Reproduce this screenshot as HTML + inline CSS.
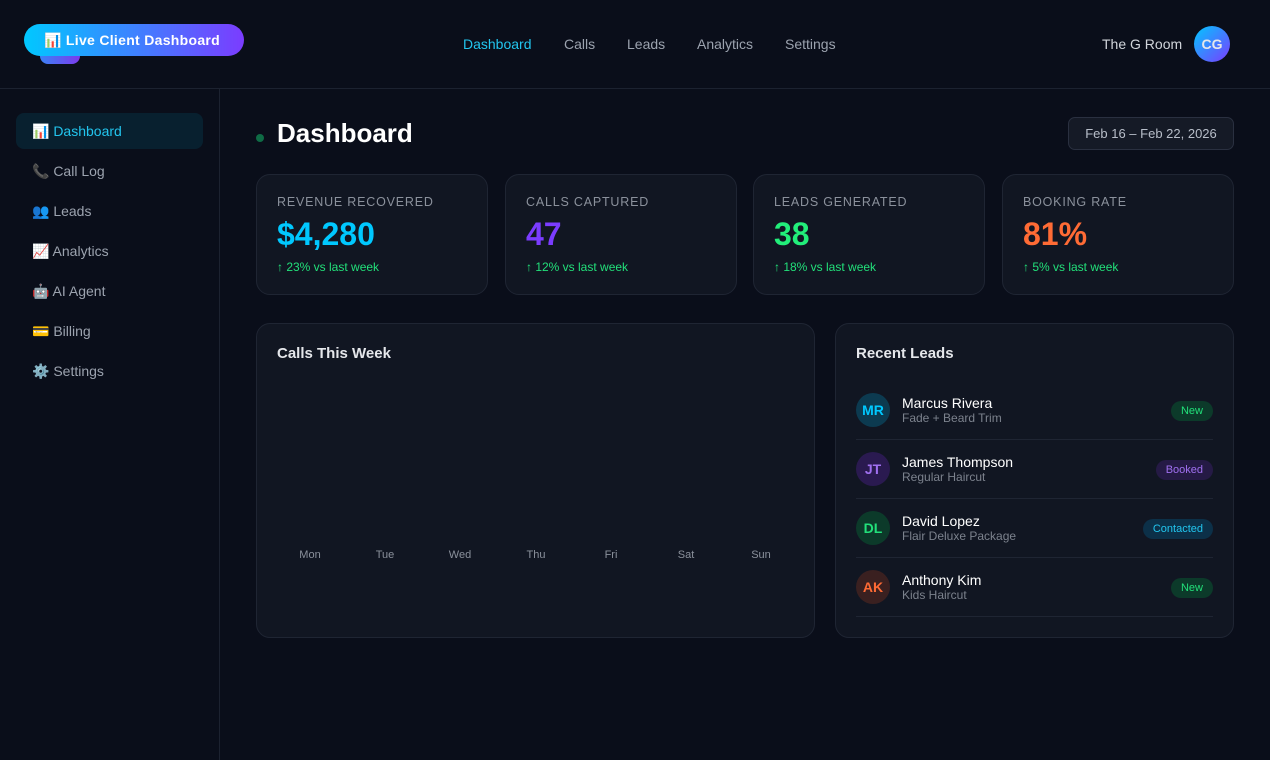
<!DOCTYPE html>
<html><head><meta charset="utf-8"><style>
*{box-sizing:border-box;margin:0;padding:0}
body{width:1270px;height:760px;background:#0a0e1a;font-family:"Liberation Sans","Noto Sans CJK SC",sans-serif;color:#e5e7eb;position:relative;overflow:hidden}
.hdr{position:absolute;left:0;top:0;width:1270px;height:89px;border-bottom:1px solid #1c2230}
.badge2{position:absolute;left:40px;top:44px;width:40px;height:20px;border-radius:8px;background:linear-gradient(90deg,#3b82f6,#7c3aed)}
.badge{position:absolute;left:24px;top:24px;width:220px;height:32px;border-radius:16px;background:linear-gradient(90deg,#00c8ff,#7b3cff);color:#fff;font-weight:bold;font-size:14px;line-height:33px;padding-left:20px;letter-spacing:.3px}
.nav{position:absolute;top:36px;font-size:14px;color:#9ca3af}
.user{position:absolute;left:1102px;top:36px;font-size:14px;color:#d1d5db}
.av{position:absolute;left:1194px;top:26px;width:36px;height:36px;border-radius:50%;background:linear-gradient(135deg,#00c8ff,#7b3cff);color:#e5e7eb;font-weight:bold;font-size:14px;text-align:center;line-height:36px}
.side{position:absolute;left:0;top:89px;width:220px;height:671px;border-right:1px solid #1c2230}
.si{position:absolute;left:16px;width:187px;height:36px;border-radius:8px;font-size:14px;color:#9ca3af;line-height:36px;padding-left:16px}
.si.on{background:#08202f;color:#22c5ee}
h1{position:absolute;left:277px;top:118px;font-size:26px;color:#fff;font-weight:bold}
.dot{position:absolute;left:256px;top:134px;width:8px;height:8px;border-radius:50%;background:#0f6b45}
.date{position:absolute;left:1068px;top:117px;width:166px;height:33px;border:1px solid #2a3040;border-radius:7px;background:#151a26;font-size:13px;color:#b8bec9;text-align:center;line-height:31px}
.card{position:absolute;top:174px;width:232px;height:121px;background:#111622;border:1px solid #1f2533;border-radius:14px;padding:20px}
.lab{font-size:12.5px;letter-spacing:.8px;color:#8b919c}
.val{font-size:32px;font-weight:bold;margin-top:7px}
.ch{font-size:12px;color:#22e07a;margin-top:7px}
.panel{position:absolute;top:323px;height:315px;background:#111622;border:1px solid #1f2533;border-radius:14px}
.pt{position:absolute;left:20px;top:21px;font-size:15px;font-weight:bold;color:#e5e7eb}
.day{position:absolute;top:549px;font-size:11px;color:#8b919c;width:40px;text-align:center}
.row{position:absolute;left:856px;width:357px;height:59px;border-bottom:1px solid #1f2533}
.ra{position:absolute;left:0;top:12px;width:34px;height:34px;border-radius:50%;font-weight:bold;font-size:14px;text-align:center;line-height:34px}
.rn{position:absolute;left:46px;top:14px;font-size:14px;color:#fff}
.rs{position:absolute;left:46px;top:30px;font-size:12px;color:#7c828d}
.tag{position:absolute;right:0;top:20px;height:20px;border-radius:10px;font-size:11px;line-height:20px;padding:0 10px}
</style></head><body>
<div class="hdr"></div>
<div class="badge2"></div>
<div class="badge">📊 Live Client Dashboard</div>
<div class="nav" style="left:463px;color:#22c5ee">Dashboard</div>
<div class="nav" style="left:564px">Calls</div>
<div class="nav" style="left:627px">Leads</div>
<div class="nav" style="left:697px">Analytics</div>
<div class="nav" style="left:785px">Settings</div>
<div class="user">The G Room</div>
<div class="av">CG</div>
<div class="side"></div>
<div class="si on" style="top:113px">📊 Dashboard</div>
<div class="si" style="top:153px">📞 Call Log</div>
<div class="si" style="top:193px">👥 Leads</div>
<div class="si" style="top:233px">📈 Analytics</div>
<div class="si" style="top:273px">🤖 AI Agent</div>
<div class="si" style="top:313px">💳 Billing</div>
<div class="si" style="top:353px">⚙️ Settings</div>
<div class="dot"></div>
<h1>Dashboard</h1>
<div class="date">Feb 16 – Feb 22, 2026</div>
<div class="card" style="left:256px"><div class="lab">REVENUE RECOVERED</div><div class="val" style="color:#00c8ff">$4,280</div><div class="ch">↑ 23% vs last week</div></div>
<div class="card" style="left:505px"><div class="lab">CALLS CAPTURED</div><div class="val" style="color:#7b3cff">47</div><div class="ch">↑ 12% vs last week</div></div>
<div class="card" style="left:753px"><div class="lab">LEADS GENERATED</div><div class="val" style="color:#22ee7a">38</div><div class="ch">↑ 18% vs last week</div></div>
<div class="card" style="left:1002px"><div class="lab">BOOKING RATE</div><div class="val" style="color:#ff6b35">81%</div><div class="ch">↑ 5% vs last week</div></div>
<div class="panel" style="left:256px;width:559px"><div class="pt">Calls This Week</div></div>
<div class="day" style="left:290px">Mon</div><div class="day" style="left:365px">Tue</div><div class="day" style="left:440px">Wed</div><div class="day" style="left:516px">Thu</div><div class="day" style="left:591px">Fri</div><div class="day" style="left:666px">Sat</div><div class="day" style="left:741px">Sun</div>
<div class="panel" style="left:835px;width:399px"><div class="pt">Recent Leads</div></div>
<div class="row" style="top:381px"><div class="ra" style="background:#0c3a50;color:#00c8ff">MR</div><div class="rn">Marcus Rivera</div><div class="rs">Fade + Beard Trim</div><div class="tag" style="background:#0c3a2a;color:#22e07a">New</div></div>
<div class="row" style="top:440px"><div class="ra" style="background:#2a1a50;color:#a070f0">JT</div><div class="rn">James Thompson</div><div class="rs">Regular Haircut</div><div class="tag" style="background:#251a45;color:#a070f0">Booked</div></div>
<div class="row" style="top:499px"><div class="ra" style="background:#0c3a2a;color:#22e07a">DL</div><div class="rn">David Lopez</div><div class="rs">Flair Deluxe Package</div><div class="tag" style="background:#0c3048;color:#22c5ee">Contacted</div></div>
<div class="row" style="top:558px"><div class="ra" style="background:#3a2020;color:#ff6b35">AK</div><div class="rn">Anthony Kim</div><div class="rs">Kids Haircut</div><div class="tag" style="background:#0c3a2a;color:#22e07a">New</div></div>
</body></html>
